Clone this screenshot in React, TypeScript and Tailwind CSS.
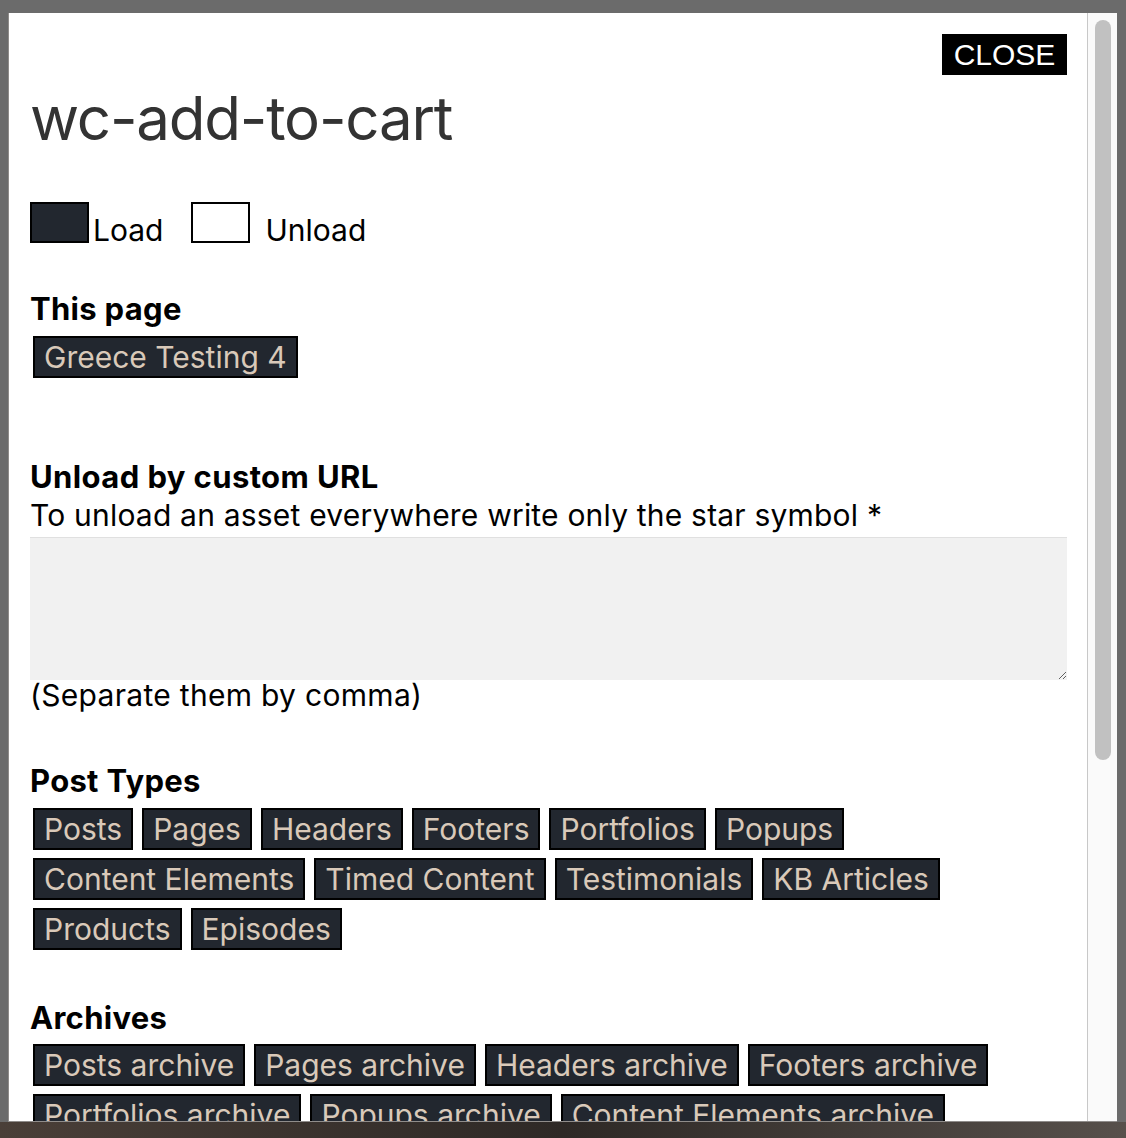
const postTypes = [
  "Posts",
  "Pages",
  "Headers",
  "Footers",
  "Portfolios",
  "Popups",
  "Content Elements",
  "Timed Content",
  "Testimonials",
  "KB Articles",
  "Products",
  "Episodes",
];

const archives = [
  "Posts archive",
  "Pages archive",
  "Headers archive",
  "Footers archive",
  "Portfolios archive",
  "Popups archive",
  "Content Elements archive",
  "Timed Content archive",
];

function Tag({ label }: { label: string }) {
  return (
    <span className="h-[42px] px-[9px] flex items-center bg-[#22272f] border-2 border-black text-[#d9c9b9] text-[30px] leading-none whitespace-nowrap">
      {label}
    </span>
  );
}

function TagList({ items }: { items: string[] }) {
  return (
    <div className="flex flex-wrap gap-x-[9px] gap-y-[8px] pl-[3px]">
      {items.map((t) => (
        <Tag key={t} label={t} />
      ))}
    </div>
  );
}

export default function App() {
  return (
    <div className="w-[1126px] h-[1138px] overflow-hidden bg-[#6b6b6b] flex flex-col font-['Inter',sans-serif]">
      <div className="pt-[13px] pl-[8px] pr-[9px] flex-1 min-h-0">
        <div className="h-[1109px] bg-white border-l border-b border-[#8f8c8a] flex overflow-hidden">
          <div className="flex-1 min-w-0 pl-[21px] pr-[20px] pt-[21px] overflow-hidden">
            <div className="flex justify-end">
              <button className="h-[41px] w-[125px] bg-black text-white text-[30px] leading-none font-['Liberation_Sans',Arial,sans-serif]">
                CLOSE
              </button>
            </div>
            <h1 className="mt-[11px] text-[60px] leading-[64px] text-[#333] font-normal tracking-[-1.2px]">
              wc-add-to-cart
            </h1>

            <div className="mt-[51px] flex items-end h-[42px] text-[30px] leading-[38px] text-black">
              <span className="w-[59px] h-[41px] bg-[#22272f] border-2 border-black" />
              <span className="ml-[4px] mb-[-6px]">Load</span>
              <span className="ml-[28px] w-[59px] h-[41px] bg-white border-2 border-black" />
              <span className="ml-[15px] mb-[-6px]">Unload</span>
            </div>

            <div className="mt-[47px] text-[31px] leading-[38px] font-bold text-black tracking-[0.3px]">This page</div>
            <div className="mt-[8px] flex pl-[3px]">
              <Tag label="Greece Testing 4" />
            </div>

            <div className="mt-[80px] text-[31px] leading-[38px] font-bold text-black tracking-[0.4px]">
              Unload by custom URL
            </div>
            <div className="text-[30px] leading-[38px] text-black tracking-[0.2px]">
              To unload an asset everywhere write only the star symbol *
            </div>
            <textarea className="mt-[3px] block w-full h-[143px] bg-[#f1f1f1] border-t border-[#e0e0e0] outline-none resize" />
            <div className="text-[30px] leading-[30px] text-black tracking-[0.3px]">(Separate them by comma)</div>

            <div className="mt-[52px] text-[31px] leading-[38px] font-bold text-black tracking-[0.3px]">Post Types</div>
            <div className="mt-[8px]">
              <TagList items={postTypes} />
            </div>

            <div className="mt-[49px] text-[31px] leading-[38px] font-bold text-black tracking-[0.3px]">Archives</div>
            <div className="mt-[7px]">
              <TagList items={archives} />
            </div>
          </div>
          <div className="w-[30px] shrink-0 bg-[#fafafa] border-l border-[#c8c8c8] pt-[7px] flex justify-center">
            <div className="w-[16px] h-[740px] rounded-full bg-[#c1c1c1]" />
          </div>
        </div>
      </div>
      <div className="h-[16px] shrink-0 bg-gradient-to-r from-[#4a3f38] via-[#2e2926] to-[#57504b]" />
    </div>
  );
}
